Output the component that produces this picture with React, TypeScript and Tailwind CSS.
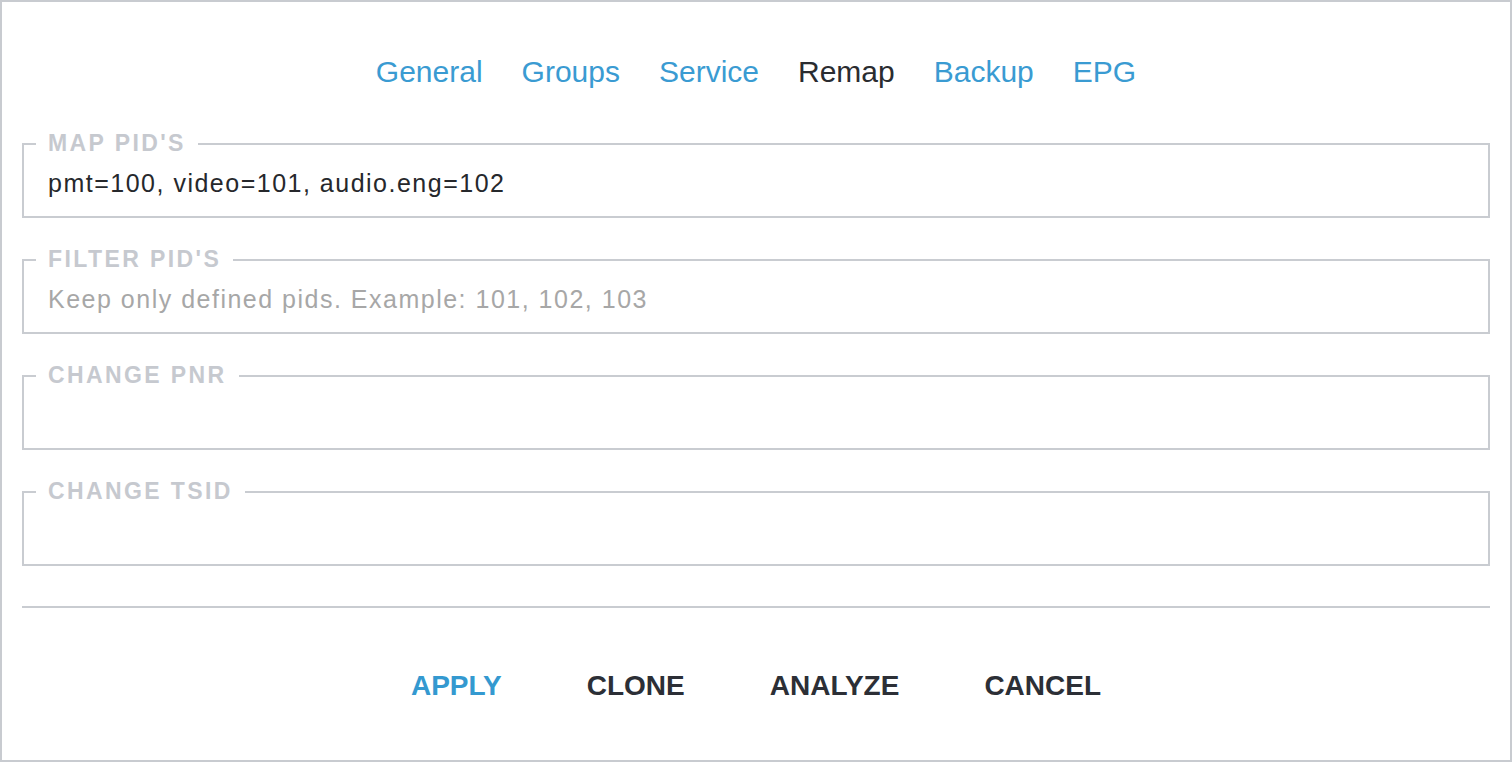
import React from "react";

const tabs = ["General", "Groups", "Service", "Remap", "Backup", "EPG"];

type FieldProps = {
    label: string;
    value?: string;
    placeholder?: string;
};

const Field: React.FC<FieldProps> = ({ label, value, placeholder }) => {
    return (
        <fieldset className="border-2 border-[#c9ccd1] px-3 mt-[30px] first:mt-0">
            <legend className="px-3 text-[23px] leading-none font-bold tracking-[2.4px] text-[#c6c9cf]">
                {label}
            </legend>
            <div className="h-[61px] flex items-center px-3 pb-[4px] text-[25px] leading-none tracking-[1.5px]">
                {value ? (
                    <span className="text-[#26282c]">{value}</span>
                ) : (
                    <span className="text-[#a7a7a7]">{placeholder}</span>
                )}
            </div>
        </fieldset>
    );
};

const App: React.FC = () => {
    return (
        <div
            className="w-[1512px] h-[762px] border-2 border-[#c8cbd0] bg-white px-[20px] overflow-hidden"
            style={{ fontFamily: '"Liberation Sans", Arial, sans-serif' }}
        >
            {/* tabs */}
            <nav className="h-[30px] mt-[55px] mb-[45px] flex items-center justify-center gap-[39px] text-[30px] leading-none">
                {tabs.map((t) => (
                    <span key={t} className={t === "Remap" ? "text-[#2a2c30]" : "text-[#3a9bd2]"}>
                        {t}
                    </span>
                ))}
            </nav>

            {/* fields */}
            <div className="flex flex-col">
                <Field label="MAP PID'S" value="pmt=100, video=101, audio.eng=102" />
                <Field label="FILTER PID'S" placeholder="Keep only defined pids. Example: 101, 102, 103" />
                <Field label="CHANGE PNR" />
                <Field label="CHANGE TSID" />
            </div>

            <div className="mt-[40px] h-[2px] bg-[#c9ccd1]" />

            {/* actions */}
            <div className="mt-[64px] h-[28px] flex items-center justify-center gap-[85px] text-[28px] leading-none font-bold">
                <button className="text-[#3499d0]">APPLY</button>
                <button className="text-[#2c2f36]">CLONE</button>
                <button className="text-[#2c2f36]">ANALYZE</button>
                <button className="text-[#2c2f36]">CANCEL</button>
            </div>
        </div>
    );
};

export default App;
